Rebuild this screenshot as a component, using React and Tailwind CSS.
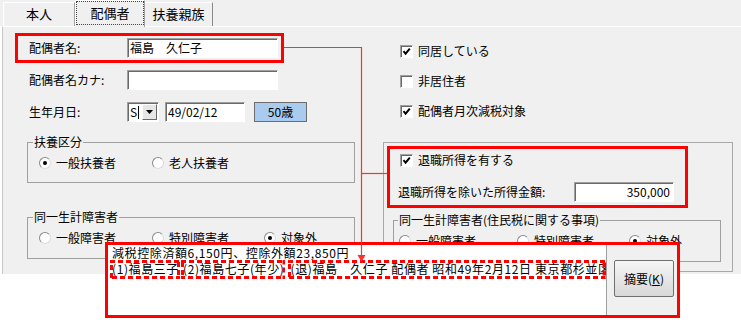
import React from "react";

function Check({ checked }) {
  return (
    <span className="relative block w-[13px] h-[13px] shrink-0 bg-white border border-t-[#a0a0a0] border-l-[#a0a0a0] border-r-white border-b-white shadow-[inset_1px_1px_0_#696969]">
      {checked && (
        <svg className="absolute left-0 top-0" width="11" height="11" viewBox="0 0 11 11">
          <path d="M2.5 5.2 L4.6 7.6 L8.8 2.6" fill="none" stroke="#000" strokeWidth="2" />
        </svg>
      )}
    </span>
  );
}

function Radio({ checked }) {
  return (
    <span className="flex items-center justify-center w-[12px] h-[12px] shrink-0 rounded-full bg-white border border-t-[#8a8a8a] border-l-[#8a8a8a] border-r-[#dcdcdc] border-b-[#dcdcdc]">
      {checked && <span className="block w-[4px] h-[4px] rounded-full bg-black" />}
    </span>
  );
}

function Dash({ className }) {
  return (
    <span className={"absolute pointer-events-none " + className}>
      <svg className="block w-full h-full">
        <rect x="0" y="0" width="100%" height="100%" fill="none" stroke="#ff0000" strokeWidth="6" strokeDasharray="5 3" />
      </svg>
    </span>
  );
}

export default function App() {
  return (
    <div className="relative w-[741px] h-[320px] overflow-hidden bg-white text-[12px] leading-none text-black font-['Noto_Sans_CJK_JP','Noto_Sans',sans-serif]">
      {/* tab strip */}
      <div className="h-[26px] bg-[#f0f0f0] flex items-end pl-[3px]">
        <div className="w-[72px] h-[24px] border-t border-l border-white border-r border-r-[#a0a0a0] flex items-center justify-center pb-[2px] text-[13px]">
          本人
        </div>
        <div className="relative z-10 w-[70px] h-[27px] -mb-px bg-[#f0f0f0] border-t border-l border-white border-r border-r-[#a0a0a0] flex items-center justify-center pb-[4px] text-[13px]">
          <span className="absolute left-0 top-0 right-0 bottom-[2px] border border-dotted border-[#444]" />
          配偶者
        </div>
        <div className="w-[68px] h-[24px] border-t border-white border-r border-r-[#8a8a8a] flex items-center justify-center pb-[2px] text-[13px]">
          扶養親族
        </div>
      </div>

      {/* panel */}
      <div className="ml-[2px] h-[248px] bg-[#f0f0f0] border-t border-t-white border-l border-l-[#c8c8c8] flex">
        {/* left column */}
        <div className="w-[360px] shrink-0 pl-[24px] pt-[11px]">
          <div className="flex items-center h-[20px] pl-[2px]">
            <span className="w-[98px]">配偶者名:</span>
            <div className="w-[151px] h-[20px] bg-white border border-t-[#a0a0a0] border-l-[#a0a0a0] border-r-white border-b-white shadow-[inset_1px_1px_0_#696969] flex items-center px-[2px]">
              福島　久仁子
            </div>
          </div>
          <div className="flex items-center h-[20px] pl-[2px] mt-[12px]">
            <span className="w-[98px]">配偶者名カナ:</span>
            <div className="w-[151px] h-[20px] bg-white border border-t-[#a0a0a0] border-l-[#a0a0a0] border-r-white border-b-white shadow-[inset_1px_1px_0_#696969]" />
          </div>
          <div className="flex items-center h-[20px] pl-[2px] mt-[12px]">
            <span className="w-[98px]">生年月日:</span>
            <div className="w-[32px] h-[20px] bg-white border border-t-[#a0a0a0] border-l-[#a0a0a0] border-r-white border-b-white shadow-[inset_1px_1px_0_#696969] flex items-center pl-[2px] pr-[1px]">
              <span className="w-[8px]">S</span>
              <span className="block w-px h-[13px] bg-black" />
              <span className="ml-[3px] w-[15px] h-[16px] bg-[#e6e6e6] border border-t-white border-l-white border-r-[#696969] border-b-[#696969] flex items-center justify-center">
                <svg width="7" height="4" viewBox="0 0 7 4">
                  <path d="M0 0 H7 L3.5 4 Z" fill="#000" />
                </svg>
              </span>
            </div>
            <div className="ml-[6px] w-[80px] h-[20px] bg-white border border-t-[#a0a0a0] border-l-[#a0a0a0] border-r-white border-b-white shadow-[inset_1px_1px_0_#696969] flex items-center px-[2px]">
              49/02/12
            </div>
            <div className="ml-[9px] w-[53px] h-[20px] bg-[#a9cbef] border border-[#6d6d6d] flex items-center justify-center">
              50歳
            </div>
          </div>

          <fieldset className="mt-[12px] w-[328px] border border-[#a0a0a0] p-0 m-0">
            <legend className="ml-[5px] px-[1px] leading-[16px]">扶養区分</legend>
            <div className="pl-[11px] pt-[6px] pb-[12px] flex items-center h-[32px]">
              <div className="w-[113px] flex items-center gap-[5px]">
                <Radio checked />
                <span>一般扶養者</span>
              </div>
              <div className="flex items-center gap-[5px]">
                <Radio />
                <span>老人扶養者</span>
              </div>
            </div>
          </fieldset>

          <fieldset className="mt-[26px] w-[328px] border border-[#a0a0a0] p-0 m-0">
            <legend className="ml-[5px] px-[1px] leading-[16px]">同一生計障害者</legend>
            <div className="pl-[11px] pt-[6px] pb-[13px] flex items-center h-[33px]">
              <div className="w-[113px] flex items-center gap-[5px]">
                <Radio />
                <span>一般障害者</span>
              </div>
              <div className="w-[112px] flex items-center gap-[5px]">
                <Radio />
                <span>特別障害者</span>
              </div>
              <div className="flex items-center gap-[5px]">
                <Radio checked />
                <span>対象外</span>
              </div>
            </div>
          </fieldset>
        </div>

        {/* right column */}
        <div className="ml-[20px] w-[350px] shrink-0 pt-[16px]">
          <div className="flex items-center h-[16px] pl-[17px] gap-[5px]">
            <Check checked />
            <span>同居している</span>
          </div>
          <div className="flex items-center h-[16px] pl-[17px] gap-[5px] mt-[14px]">
            <Check />
            <span>非居住者</span>
          </div>
          <div className="flex items-center h-[16px] pl-[17px] gap-[5px] mt-[14px]">
            <Check checked />
            <span>配偶者月次減税対象</span>
          </div>

          <div className="mt-[23px] border border-[#a8a8a8] pt-[9px] pb-[9px]">
            <div className="flex items-center h-[16px] pl-[16px] gap-[5px]">
              <Check checked />
              <span>退職所得を有する</span>
            </div>
            <div className="flex items-center h-[20px] pl-[14px] mt-[14px]">
              <span className="w-[176px]">退職所得を除いた所得金額:</span>
              <div className="w-[100px] h-[20px] bg-white border border-t-[#a0a0a0] border-l-[#a0a0a0] border-r-white border-b-white shadow-[inset_1px_1px_0_#696969] flex items-center justify-end pr-[3px]">
                350,000
              </div>
            </div>
            <fieldset className="mt-[10px] ml-[9px] w-[328px] border border-[#a0a0a0] p-0 m-0">
              <legend className="ml-[4px] px-[1px] leading-[16px]">同一生計障害者(住民税に関する事項)</legend>
              <div className="pl-[5px] pt-[6px] pb-[13px] flex items-center h-[33px]">
                <div className="w-[118px] flex items-center gap-[5px]">
                  <Radio />
                  <span>一般障害者</span>
                </div>
                <div className="w-[112px] flex items-center gap-[5px]">
                  <Radio />
                  <span>特別障害者</span>
                </div>
                <div className="flex items-center gap-[5px]">
                  <Radio checked />
                  <span>対象外</span>
                </div>
              </div>
            </fieldset>
          </div>
        </div>
      </div>

      {/* annotation frames */}
      <div className="absolute left-[15px] top-[33px] w-[269px] h-[30px] border-[3px] border-[#ff0000] pointer-events-none" />
      <div className="absolute left-[387px] top-[146px] w-[301px] h-[62px] border-[3px] border-[#ff0000] pointer-events-none" />

      {/* popup summary */}
      <div className="absolute left-[105px] top-[242px] w-[575px] h-[76px] border-[3px] border-[#ff0000] bg-[#f0f0f0] flex">
        <div className="w-[499px] h-full bg-white border-r border-[#a0a0a0] pl-[4px] leading-[16px] tracking-[0.6px] whitespace-nowrap overflow-hidden">
          <div>減税控除済額6,150円、控除外額23,850円</div>
          <div className="flex">
            <span className="relative shrink-0">
              (1)福島三子
              <Dash className="-left-[2px] -right-[1px] -top-[1px] -bottom-[2px]" />
            </span>
            <span className="relative shrink-0 ml-[4px]">
              (2)福島七子(年少)
              <Dash className="-left-[2px] -right-[1px] -top-[1px] -bottom-[2px]" />
            </span>
            <span className="relative flex-1 min-w-0 ml-[6px]">
              <span className="block overflow-hidden pr-[2px]">(退)福島　久仁子 配偶者 昭和49年2月12日 東京都杉並区高井戸東</span>
              <Dash className="-left-[2px] right-0 -top-[1px] -bottom-[2px]" />
            </span>
          </div>
        </div>
        <div className="flex-1 pl-[7px] pt-[15px]">
          <div className="w-[60px] h-[37px] rounded-[2px] border border-[#707070] bg-gradient-to-b from-[#f6f6f6] to-[#d8d8d8] flex items-center justify-center">
            <span>摘要(<span className="underline">K</span>)</span>
          </div>
        </div>
      </div>

      {/* connector lines */}
      <svg className="absolute left-0 top-0 pointer-events-none" width="741" height="320">
        <path d="M284 47.5 H361.5 V256" stroke="#ff3030" fill="none" strokeWidth="1.2" />
        <path d="M361.5 173.5 H387" stroke="#ff3030" fill="none" strokeWidth="1.2" />
        <path d="M357.5 255 H365.5 L361.5 262 Z" fill="#ff3030" />
      </svg>
    </div>
  );
}
